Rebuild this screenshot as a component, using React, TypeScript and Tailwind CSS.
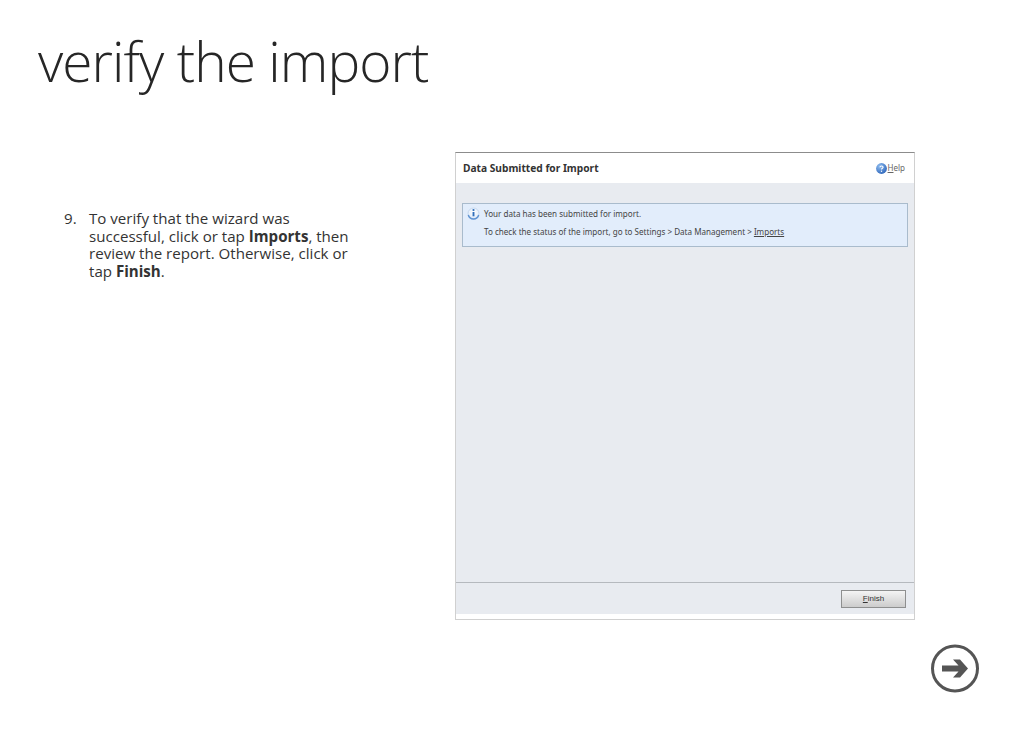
import React from "react";

function InfoIcon() {
  return (
    <svg width="13" height="14" viewBox="0 0 13 14" className="shrink-0">
      <defs>
        <radialGradient id="ig" cx="50%" cy="40%" r="60%">
          <stop offset="0%" stopColor="#ffffff" />
          <stop offset="100%" stopColor="#dbe8f8" />
        </radialGradient>
      </defs>
      <circle cx="6.5" cy="6.500" r="5.500" fill="url(#ig)" stroke="#bcd2ec" strokeWidth="0.800" />
      <path d="M1.300 8a5.400 5.400 0 0 0 10.400 0" fill="none" stroke="#5f93d2" strokeWidth="1.400" />
      <circle cx="6.5" cy="3" r="1.100" fill="#2f6fbb" />
      <path d="M6.500 5v4.300" stroke="#2f6fbb" strokeWidth="1.900" />
    </svg>
  );
}

function HelpIcon() {
  return (
    <svg width="11" height="11" viewBox="0 0 11 11" className="shrink-0">
      <defs>
        <radialGradient id="hg" cx="35%" cy="30%" r="80%">
          <stop offset="0%" stopColor="#8fbdf0" />
          <stop offset="100%" stopColor="#2a62b8" />
        </radialGradient>
      </defs>
      <circle cx="5.5" cy="5.5" r="5.4" fill="url(#hg)" />
      <path d="M3.900 4.200c.2-1.600 3.200-1.600 3.200 0 0 1.100-1.600 1-1.600 2.400" fill="none" stroke="#fff" strokeWidth="1.100" />
      <circle cx="5.5" cy="8.300" r=".7" fill="#fff" />
    </svg>
  );
}

function NextArrow() {
  return (
    <svg width="50" height="50" viewBox="0 0 50 50">
      <circle cx="25" cy="24.500" r="22.500" fill="none" stroke="#555555" strokeWidth="3" />
      <path d="M12 21.500h16.500l-5.500-6h7l8 9-8 9h-7l5.500-6H12z" fill="#555555" />
    </svg>
  );
}

export default function App() {
  return (
    <div className="w-[1024px] h-[739px] bg-white overflow-hidden flex flex-col font-['Open_Sans','Noto_Sans',sans-serif] text-[#262626]">
      <h1 className="ml-[38px] mt-[23px] h-[76px] text-[55px] leading-[76px] font-light tracking-[-0.95px] text-[#262626]">
        verify the import
      </h1>
      <div className="flex mt-[53px]">
        <ol className="ml-[64px] w-[301px] mt-[58px] flex text-[15.100px] leading-[17.600px] text-[#333333]">
          <li className="flex">
            <span className="w-[25px] shrink-0">9.</span>
            <span>
              To verify that the wizard was
              <br />
              successful, click or tap <b className="font-bold">Imports</b>, then
              <br />
              review the report. Otherwise, click or
              <br />
              tap <b className="font-bold">Finish</b>.
            </span>
          </li>
        </ol>
        <section className="ml-[90px] w-[460px] h-[468px] flex flex-col bg-white border border-[#d0d0d0] border-t-[#8c8c8c] font-['Noto_Sans','Open_Sans',sans-serif]">
          <header className="h-[30px] shrink-0 flex items-center justify-between pl-[7px] pr-[9px] bg-white">
            <span className="text-[10.200px] font-bold text-[#333333] leading-none pt-[1px]">Data Submitted for Import</span>
            <span className="flex items-center gap-[1px] text-[8px] text-[#666666] leading-none">
              <HelpIcon />
              <span>
                <u>H</u>elp
              </span>
            </span>
          </header>
          <div className="flex-1 bg-[#e8ebf0] pt-[20px] px-[6px]">
            <div className="h-[44px] bg-[#e2edfb] border border-[#a9bbcc] flex gap-[4px] pl-[4px] pt-[3px] text-[8.080px] text-[#444444]">
              <InfoIcon />
              <div className="flex flex-col gap-[7px] pt-[1px] leading-[11px]">
                <span>Your data has been submitted for import.</span>
                <span>
                  To check the status of the import, go to Settings &gt; Data Management &gt; <u>Imports</u>
                </span>
              </div>
            </div>
          </div>
          <footer className="h-[32px] shrink-0 bg-[#e8ebf0] border-t border-[#b5b9be] flex items-center justify-end pr-[8px]">
            <button className="w-[65px] h-[18px] border border-[#8e8f8f] bg-gradient-to-b from-[#f4f4f4] to-[#cccccc] text-[8px] leading-none text-[#333333] font-['Liberation_Sans',sans-serif]">
              <u>F</u>inish
            </button>
          </footer>
          <div className="h-[5px] shrink-0 bg-white" />
        </section>
      </div>
      <div className="flex justify-end pr-[44px] mt-[24px]">
        <NextArrow />
      </div>
    </div>
  );
}
